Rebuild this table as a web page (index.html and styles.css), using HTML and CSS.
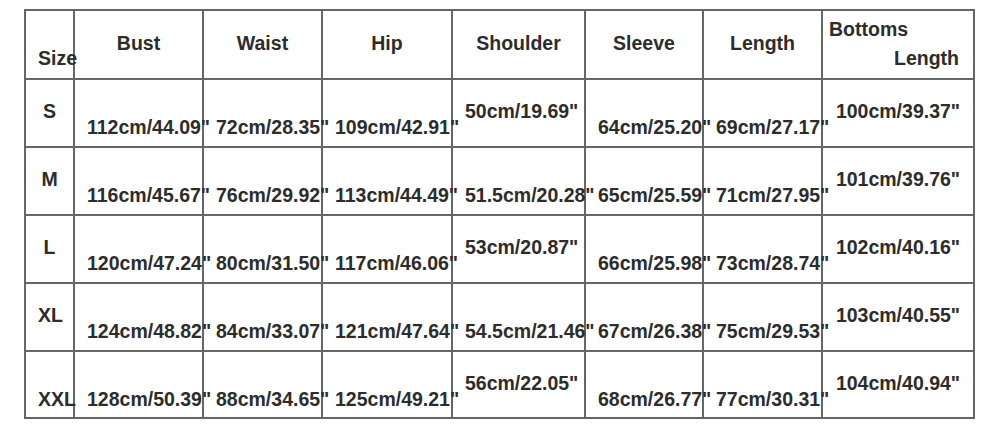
FILE: index.html
```html
<!DOCTYPE html>
<html>
<head>
<meta charset="utf-8">
<link rel="stylesheet" href="styles.css">
</head>
<body>
<div class="chart">
  <div class="cell lo">Size</div>
  <div class="cell hd">Bust</div>
  <div class="cell hd">Waist</div>
  <div class="cell hd">Hip</div>
  <div class="cell hd">Shoulder</div>
  <div class="cell hd">Sleeve</div>
  <div class="cell hd">Length</div>
  <div class="cell two"><span class="l1">Bottoms</span><span class="l2">Length</span></div>

  <div class="cell hi">S</div>
  <div class="cell lo">112cm/44.09"</div>
  <div class="cell lo">72cm/28.35"</div>
  <div class="cell lo">109cm/42.91"</div>
  <div class="cell hi">50cm/19.69"</div>
  <div class="cell lo">64cm/25.20"</div>
  <div class="cell lo">69cm/27.17"</div>
  <div class="cell hi">100cm/39.37"</div>

  <div class="cell hi">M</div>
  <div class="cell lo">116cm/45.67"</div>
  <div class="cell lo">76cm/29.92"</div>
  <div class="cell lo">113cm/44.49"</div>
  <div class="cell lo">51.5cm/20.28"</div>
  <div class="cell lo">65cm/25.59"</div>
  <div class="cell lo">71cm/27.95"</div>
  <div class="cell hi">101cm/39.76"</div>

  <div class="cell hi">L</div>
  <div class="cell lo">120cm/47.24"</div>
  <div class="cell lo">80cm/31.50"</div>
  <div class="cell lo">117cm/46.06"</div>
  <div class="cell hi">53cm/20.87"</div>
  <div class="cell lo">66cm/25.98"</div>
  <div class="cell lo">73cm/28.74"</div>
  <div class="cell hi">102cm/40.16"</div>

  <div class="cell hi">XL</div>
  <div class="cell lo">124cm/48.82"</div>
  <div class="cell lo">84cm/33.07"</div>
  <div class="cell lo">121cm/47.64"</div>
  <div class="cell lo">54.5cm/21.46"</div>
  <div class="cell lo">67cm/26.38"</div>
  <div class="cell lo">75cm/29.53"</div>
  <div class="cell hi">103cm/40.55"</div>

  <div class="cell lo">XXL</div>
  <div class="cell lo">128cm/50.39"</div>
  <div class="cell lo">88cm/34.65"</div>
  <div class="cell lo">125cm/49.21"</div>
  <div class="cell hi">56cm/22.05"</div>
  <div class="cell lo">68cm/26.77"</div>
  <div class="cell lo">77cm/30.31"</div>
  <div class="cell hi">104cm/40.94"</div>
</div>
</body>
</html>
```

FILE: styles.css
```css
html, body {
  margin: 0;
  padding: 0;
  background: #ffffff;
}

body {
  font-family: "Liberation Sans", Arial, sans-serif;
  font-weight: bold;
  font-size: 19.5px;
  color: #2c2c2c;
}

.chart {
  display: grid;
  grid-template-columns: 49px 129px 119px 130px 133px 118px 119px 152px;
  grid-template-rows: 69px 68px 68px 68px 68px 67px;
  border-top: 2px solid #666666;
  border-left: 2px solid #666666;
  width: max-content;
  margin: 9px 0 0 24px;
}

.cell {
  border-right: 2px solid #666666;
  border-bottom: 2px solid #666666;
  padding: 0 12px;
  line-height: 20px;
  text-align: center;
  white-space: nowrap;
  min-width: 0;
}

.hd {
  padding-top: 22px;
}

.hi {
  padding-top: 21px;
}

.lo {
  padding-top: 37px;
}

.two {
  padding: 8px 14px 0 6px;
  display: flex;
  flex-direction: column;
}

.l1 {
  align-self: flex-start;
}

.l2 {
  align-self: flex-end;
  margin-top: 9px;
}
```
